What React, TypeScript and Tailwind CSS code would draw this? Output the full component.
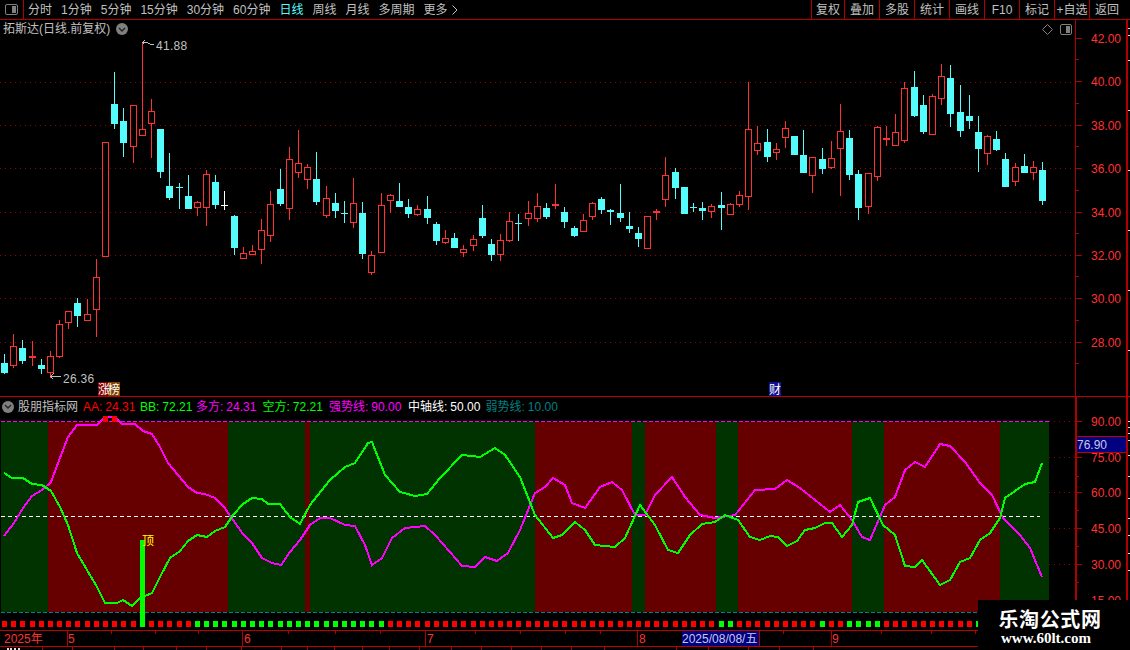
import React from "react";

const RED = "#ff3232";
const CYAN = "#54fcfc";
const LINE = "#b00000";
const DOT = "#9a0000";

type C = [number, string, number, number, number, number];
const candles: C[] = [
  [4,"c",363,373,354,374],[13,"r",346,366,334,368],[22,"c",348,361,340,364],[32,"r",356,358,341,366],
  [41,"c",365,369,359,374],[50,"r",356,373,351,378],[59,"r",324,357,320,358],[68,"r",311,323,311,329],
  [77,"c",303,316,298,327],[87,"r",314,321,299,321],[96,"r",277,310,259,337],[105,"r",142,257,142,257],
  [114,"c",104,124,72,129],[123,"c",121,143,108,157],[133,"r",105,147,105,163],[142,"r",129,136,42,136],
  [151,"r",111,124,99,158],[160,"c",129,172,129,178],[169,"c",186,198,153,200],[179,"c",187,188,183,209],
  [188,"c",196,209,175,209],[197,"r",202,208,201,216],[206,"r",174,208,170,226],[215,"c",182,205,175,209],
  [224,"w",205,206,191,210],[234,"c",216,248,215,255],[243,"r",253,259,247,259],[252,"r",251,255,245,255],
  [261,"r",230,250,219,264],[270,"r",204,236,191,242],[280,"c",189,204,169,206],[289,"r",159,209,147,220],
  [298,"r",163,173,130,178],[307,"r",167,180,164,189],[316,"c",179,202,152,205],[326,"r",198,216,186,218],
  [335,"c",203,211,193,218],[344,"c",213,214,201,223],[353,"r",203,223,178,228],[362,"c",213,254,202,259],
  [371,"r",255,273,251,275],[381,"r",205,253,193,253],[390,"r",195,201,194,213],[399,"c",201,207,183,207],
  [408,"c",207,214,199,218],[417,"r",209,215,205,216],[427,"c",209,218,196,224],[436,"c",224,241,222,245],
  [445,"r",238,243,230,244],[454,"c",238,248,233,248],[463,"r",249,253,245,257],[473,"r",239,246,235,251],
  [482,"c",218,236,205,238],[491,"c",244,255,239,261],[500,"r",240,255,234,261],[509,"r",221,241,212,242],
  [518,"c",223,224,214,241],[528,"r",213,219,201,226],[537,"r",206,219,193,222],[546,"c",208,217,203,219],
  [555,"r",204,206,184,209],[564,"c",212,222,207,228],[574,"c",228,236,226,237],[583,"r",220,232,214,232],
  [592,"r",203,217,202,220],[601,"c",199,210,197,214],[610,"c",210,212,209,225],[620,"c",213,218,184,222],
  [629,"c",226,229,212,233],[638,"c",233,239,227,247],[647,"r",216,249,216,249],[656,"r",211,213,209,220],
  [665,"r",175,200,157,207],[675,"c",172,188,168,199],[684,"c",187,214,187,214],[693,"c",207,208,203,212],
  [702,"c",208,211,202,220],[711,"r",206,212,204,218],[721,"c",205,208,192,230],[730,"r",204,215,203,215],
  [739,"r",195,205,191,207],[748,"r",129,197,82,210],[757,"r",143,151,126,155],[767,"c",142,157,129,162],
  [776,"r",149,153,143,160],[785,"r",128,138,121,148],[794,"c",136,155,136,155],[803,"c",155,173,130,173],
  [812,"r",157,176,157,193],[822,"c",159,169,148,174],[831,"r",158,168,141,169],[840,"r",131,149,104,196],
  [849,"c",138,175,130,180],[858,"c",174,208,170,220],[868,"r",173,207,173,214],[877,"r",127,177,126,181],
  [886,"r",138,140,126,146],[895,"r",132,146,114,146],[904,"r",88,141,82,143],[914,"c",87,116,71,117],
  [923,"c",105,132,95,134],[932,"r",96,135,94,135],[941,"r",76,99,64,105],[950,"c",78,114,65,127],
  [960,"c",112,131,85,137],[969,"c",116,121,95,129],[978,"c",132,149,116,172],[987,"r",136,154,135,165],
  [996,"c",139,150,131,151],[1005,"c",159,187,153,187],[1015,"r",167,182,163,186],[1024,"c",166,173,154,173],
  [1033,"r",167,173,161,180],[1042,"c",170,201,162,205],
];

const magenta =
  "4,536 14,523 23,508 32,496 42,490 51,482 60,458 68,437 77,425 97,425 100,422 105,417 115,417 122,424 135,424 143,431 152,434 160,447 168,463 178,475 188,487 197,493 205,494 215,498 224,507 233,520 243,534 252,543 262,558 272,563 281,565 290,552 300,540 310,525 320,518 330,518 345,525 355,526 365,545 372,565 382,558 392,538 405,528 425,526 435,535 450,552 462,566 475,567 485,557 497,561 508,553 520,530 535,493 545,487 553,478 565,485 572,503 585,508 600,487 612,482 622,490 635,515 645,515 655,495 672,477 685,497 700,515 715,518 735,515 755,490 775,489 787,480 800,488 815,500 830,512 840,505 852,520 862,537 870,540 885,505 895,497 905,470 915,462 925,467 940,444 950,446 965,462 980,483 992,495 1003,518 1020,535 1030,548 1042,577";
const green =
  "4,473 12,478 23,478 32,484 42,485 51,491 60,507 68,525 77,553 87,570 97,587 105,603 117,603 123,600 132,606 140,598 152,593 160,577 170,558 180,551 188,541 197,535 207,537 215,531 225,527 233,515 243,504 252,498 262,499 268,504 280,504 290,517 300,524 310,505 330,480 345,467 355,463 368,443 372,442 385,475 400,492 415,496 427,494 440,478 462,455 480,457 495,448 505,455 520,477 535,515 553,538 562,535 575,522 585,530 595,545 615,547 625,538 640,505 655,525 668,550 678,553 690,535 702,524 715,522 725,515 738,520 750,537 760,540 770,536 778,537 787,546 797,541 805,530 815,528 825,523 832,523 842,537 852,525 858,502 870,498 883,525 895,535 905,566 915,567 922,560 940,585 950,580 960,562 970,558 980,540 990,533 1000,518 1005,498 1025,484 1035,482 1042,463";

const bands: [number, number, string][] = [
  [1,48,"g"],[48,228,"r"],[228,305,"g"],[305,310,"r"],[310,535,"g"],[535,632,"r"],[632,645,"g"],
  [645,716,"r"],[716,738,"g"],[738,852,"r"],[852,884,"g"],[884,1000,"r"],[1000,1049,"g"],
];

const greenSq = (x: number) =>
  (x >= 195 && x <= 388) || x === 721 || x === 730 || x === 822 || x === 849 || x === 858 || x === 868 || x === 877 || x === 978;

function Candle({ c }: { c: C }) {
  const [x, t, top, bot, wt, wb] = c;
  const col = t === "r" ? RED : t === "c" ? CYAN : "#ffffff";
  const thin = bot - top <= 2;
  return (
    <g>
      <rect x={x} y={wt} width={1} height={wb - wt} fill={col} />
      {thin ? (
        <rect x={x - 3} y={top} width={7} height={bot - top} fill={col} />
      ) : t === "r" ? (
        <rect x={x - 2.5} y={top + 0.5} width={6} height={bot - top - 1} fill="#000" stroke={col} strokeWidth={1} />
      ) : (
        <rect x={x - 3} y={top} width={7} height={bot - top} fill={col} />
      )}
    </g>
  );
}

function MainChart() {
  const cjk = "'Noto Sans CJK SC',sans-serif";
  return (
    <svg width={1075} height={358} viewBox="0 38 1075 358" shapeRendering="crispEdges" className="block">
      {[82, 125, 168, 212, 255, 298, 342].map((y) => (
        <line key={y} x1={0} x2={1075} y1={y + 0.5} y2={y + 0.5} stroke={DOT} strokeDasharray="1 4" />
      ))}
      {candles.map((c) => (
        <Candle key={c[0]} c={c} />
      ))}
      <g stroke="#c0c0c0" fill="none">
        <path d="M142.5 42.5h4M142.5 42.5l2 -2M142.5 42.5l2 2M146 42l4 2h4" />
        <path d="M50 376.5h11M50.5 376.5l3 -3M50.5 376.5l3 3" />
      </g>
      <text x={156} y={50} fontSize={12} fill="#c0c0c0" fontFamily="'Liberation Sans',sans-serif" letterSpacing="0.3" shapeRendering="auto">41.88</text>
      <text x={63} y={383} fontSize={12} fill="#c0c0c0" fontFamily="'Liberation Sans',sans-serif" letterSpacing="0.3" shapeRendering="auto">26.36</text>
      <rect x={98} y={382} width={11} height={14} fill="#800000" />
      <rect x={108} y={382} width={12} height={14} fill="#804000" />
      <text x={98} y={394} fontSize={12} fill="#ffffff" fontFamily={cjk} shapeRendering="auto">涨</text>
      <text x={108} y={394} fontSize={12} fill="#ffffff" fontFamily={cjk} shapeRendering="auto">榜</text>
      <rect x={769} y={382} width={12} height={14} fill="#101090" />
      <text x={769} y={394} fontSize={12} fill="#ffffff" fontFamily={cjk} shapeRendering="auto">财</text>
    </svg>
  );
}

function AxisLabels({ items, minors, vb, w, h }: { items: [string, number][]; minors: number[]; vb: string; w: number; h: number }) {
  return (
    <svg width={w} height={h} viewBox={vb} className="block" shapeRendering="crispEdges">
      {items.map(([t, y]) => (
        <g key={t}>
          <rect x={1076} y={y} width={6} height={1} fill={LINE} />
          <text x={1091} y={y + 5} fontSize={12} fill={RED} fontFamily="'Liberation Sans',sans-serif" shapeRendering="auto">{t}</text>
        </g>
      ))}
      {minors.map((y) => (
        <rect key={y} x={1076} y={y} width={3} height={1} fill={LINE} />
      ))}
    </svg>
  );
}

function LowerChart() {
  const mid = 516.5;
  return (
    <svg width={1075} height={214} viewBox="0 416 1075 214" shapeRendering="crispEdges" className="block">
      {[421, 457, 492, 528, 564, 600].map((y) => (
        <line key={y} x1={1049} x2={1075} y1={y + 0.5} y2={y + 0.5} stroke={DOT} strokeDasharray="1 4" />
      ))}
      {bands.map(([a, b, k]) => (
        <rect key={a} x={a} y={422} width={b - a} height={190} fill={k === "g" ? "#003300" : "#660000"} />
      ))}
      <line x1={1} x2={1049} y1={421.5} y2={421.5} stroke="#ff00ff" strokeDasharray="4 2" />
      <line x1={1} x2={1049} y1={612.5} y2={612.5} stroke="#008080" strokeDasharray="4 2" />
      <line x1={1} x2={1040} y1={mid} y2={mid} stroke="#ffffff" strokeDasharray="4 3" />
      <polyline points={magenta} fill="none" stroke="#ff00ff" strokeWidth={2} />
      <polyline points={green} fill="none" stroke="#00ff00" strokeWidth={2} />
      <rect x={103} y={416} width={5} height={6} fill="#ff0000" />
      <rect x={112} y={416} width={5} height={6} fill="#ff0000" />
      <rect x={140} y={540} width={5} height={87} fill="#00ff00" />
      <text x={142} y={545} fontSize={12} fill="#ffff00" fontFamily="'Noto Sans CJK SC',sans-serif" shapeRendering="auto">顶</text>
      {candles.filter((c) => c[0] !== 142).map((c) => (
        <rect key={c[0]} x={c[0] - 2} y={621} width={5} height={6} fill={greenSq(c[0]) ? "#00ff00" : "#ff0000"} />
      ))}
    </svg>
  );
}

function TimeAxis() {
  const font = "'Liberation Sans','Noto Sans CJK SC',sans-serif";
  const labels: [string, number][] = [["2025年", 4], ["5", 68], ["6", 244], ["7", 427], ["8", 639], ["9", 832]];
  const seps = [67, 242, 425, 637, 831];
  const ticks = [111, 155, 198, 288, 335, 380, 475, 520, 565, 600, 783, 881, 931, 975, 1025];
  return (
    <svg width={1130} height={16} viewBox="0 631 1130 16" className="block" shapeRendering="crispEdges">
      {seps.map((x) => <rect key={x} x={x} y={631} width={1} height={15} fill={LINE} />)}
      {ticks.map((x) => <rect key={x} x={x} y={631} width={1} height={3} fill={LINE} />)}
      {labels.map(([t, x]) => (
        <text key={t} x={x} y={643} fontSize={12} fill={RED} fontFamily={font} shapeRendering="auto">{t}</text>
      ))}
      <rect x={682} y={631} width={77} height={15} fill="#000080" />
      <rect x={759} y={631} width={1} height={15} fill={LINE} />
      <text x={682} y={643} fontSize={12} fill="#c8c8e8" fontFamily={font} shapeRendering="auto">2025/08/08/五</text>
    </svg>
  );
}

const Chevron = () => (
  <span className="flex h-[12px] w-[12px] items-center justify-center rounded-full bg-[#808080]">
    <svg width="8" height="5" viewBox="0 0 8 5"><path d="M1 1l3 3 3-3" fill="none" stroke="#222" strokeWidth="1.4" /></svg>
  </span>
);

const menuLeft = ["分时", "1分钟", "5分钟", "15分钟", "30分钟", "60分钟", "日线", "周线", "月线", "多周期"];
const menuRight = ["复权", "叠加", "多股", "统计", "画线", "F10", "标记", "+自选", "返回"];

const legend: [string, string, string, string][] = [
  ["AA:", "24.31", "#ff0000", "w-[57px]"], ["BB:", "72.21", "#00ff00", "w-[56px]"], ["多方:", "24.31", "#ff00ff", "w-[66.5px]"], ["空方:", "72.21", "#00ff00", "w-[66.5px]"],
  ["强势线:", "90.00", "#ff00ff", "w-[79px]"], ["中轴线:", "50.00", "#ffffff", "w-[77.5px]"], ["弱势线:", "10.00", "#008080", "w-[80px]"],
];

const tabs = [43, 30, 42, 29, 33, 30, 35, 40, 26, 27, 28, 27, 30, 32, 30, 30, 30, 30, 33, 72, 32, 40, 31, 34];

const edgeMain = [28, 35, 60, 110, 170, 230, 290, 350];
const edgeLower = [421, 427, 433, 440, 455, 476, 498, 518, 535, 553, 570];

export default function App() {
  return (
    <div className="relative flex h-[650px] w-[1130px] flex-col overflow-hidden bg-black text-[12px] leading-none text-[#c0c0c0] [font-family:'Liberation_Sans','Noto_Sans_CJK_SC',sans-serif]">
      {/* top bar */}
      <div className="flex h-[20px] shrink-0 items-center border-b border-[#b00000]">
        <div className="flex h-full w-[24px] items-center justify-center border-r border-[#b00000]">
          <span className="flex h-[11px] w-[13px] justify-end rounded-[2px] border border-[#808080] p-px">
            <span className="w-[4px] bg-[#808080]" />
          </span>
        </div>
        <div className="flex items-center gap-[9px] pl-[4px]">
          {menuLeft.map((m) => (
            <span key={m} className={m === "日线" ? "text-[#54fcfc]" : ""}>{m}</span>
          ))}
          <span className="flex items-center gap-[4px]">
            更多
            <svg width="6" height="10" viewBox="0 0 6 10"><path d="M0.5 0.5l4.5 4.5-4.5 4.5" fill="none" stroke="#c0c0c0" /></svg>
          </span>
        </div>
        <div className="ml-auto flex h-full w-[319px]">
          {menuRight.map((m, i) => (
            <span key={m} className={`flex h-full items-center justify-center border-l border-[#b00000] ${i === 0 ? "w-[33px]" : "w-[35px]"}`}>{m}</span>
          ))}
        </div>
      </div>

      {/* main panel */}
      <div className="flex h-[376px] shrink-0">
        <div className="flex w-[1075px] flex-col">
          <div className="flex h-[18px] items-center px-[3px]">
            <span className="whitespace-nowrap">拓斯达(日线.前复权)</span>
            <span className="ml-[6px]"><Chevron /></span>
            <span className="ml-auto flex items-center gap-[7px]">
              <svg width="11" height="11" viewBox="0 0 11 11"><path d="M5.5 0.5l5 5-5 5-5-5z" fill="none" stroke="#808080" /></svg>
              <span className="flex h-[11px] w-[12px] justify-end rounded-[2px] border border-[#808080] p-px">
                <span className="w-[4px] bg-[#808080]" />
              </span>
            </span>
          </div>
          <MainChart />
        </div>
        <div className="w-[53px] shrink-0 border-l border-r-2 border-[#b00000]">
          <AxisLabels
            w={50}
            h={376}
            vb="1076 20 50 376"
            items={[["42.00", 38], ["40.00", 81], ["38.00", 125], ["36.00", 168], ["34.00", 212], ["32.00", 255], ["30.00", 298], ["28.00", 342]]}
            minors={[59, 103, 146, 190, 233, 276, 320, 363]}
          />
        </div>
        <svg width={2} height={376} viewBox="1128 20 2 376" className="block shrink-0" shapeRendering="crispEdges">
          {edgeMain.map((y) => <rect key={y} x={1128} y={y} width={2} height={1} fill="#e0e0e0" />)}
        </svg>
      </div>

      <div className="h-px shrink-0 bg-[#c00000]" />

      {/* indicator panel */}
      <div className="flex h-[233px] shrink-0">
        <div className="flex w-[1075px] flex-col">
          <div className="flex h-[19px] items-center pl-[2px] whitespace-nowrap">
            <Chevron />
            <span className="ml-[4px] mr-[5px]">股朋指标网</span>
            <span className="flex">
              {legend.map(([k, v, c, w]) => (
                <span key={k} style={{ color: c }} className={`flex gap-[3px] ${w}`}>
                  <span>{k}</span>
                  <span>{v}</span>
                </span>
              ))}
            </span>
          </div>
          <LowerChart />
        </div>
        <div className="relative w-[53px] shrink-0 border-l-2 border-r-2 border-[#b00000]">
          <AxisLabels
            w={49}
            h={233}
            vb="1077 397 49 233"
            items={[["90.00", 421], ["75.00", 457], ["60.00", 492], ["45.00", 528], ["30.00", 564], ["15.00", 600]]}
            minors={[476, 510, 546, 582]}
          />
          <div className="absolute inset-x-0 top-[39px] flex h-[17px] items-center border-y border-[#c00000] bg-[#000080] text-[#c8c8e8]">76.90</div>
        </div>
        <svg width={2} height={233} viewBox="1128 397 2 233" className="block shrink-0" shapeRendering="crispEdges">
          {edgeLower.map((y) => <rect key={y} x={1128} y={y} width={2} height={1} fill="#e0e0e0" />)}
        </svg>
      </div>

      {/* time axis */}
      <div className="h-[17px] shrink-0 border-y border-[#c00000]">
        <TimeAxis />
      </div>

      {/* clipped tab row */}
      <div className="flex h-[3px] shrink-0 overflow-hidden">
        {tabs.map((w, i) => (
          <span key={i} style={{ width: w }} className="block h-full shrink-0 border-r border-[#b00000] pl-[7px] pt-px">
            {i === 0 && <span className="block h-[2px] w-[13px] border-t-2 border-dotted border-[#e0e0e0]" />}
          </span>
        ))}
      </div>

      {/* watermark */}
      <div className="absolute right-0 bottom-0 flex h-[50px] w-[152px] flex-col items-center bg-black pr-[8px] pt-[9px] font-bold text-white">
        <span className="text-[20px] tracking-[0.6px] [font-family:'Noto_Sans_CJK_SC',sans-serif]">乐淘公式网</span>
        <span className="mt-[2px] mr-[8px] text-[15px] [font-family:'Liberation_Serif',serif]">www.60lt.com</span>
      </div>
    </div>
  );
}
